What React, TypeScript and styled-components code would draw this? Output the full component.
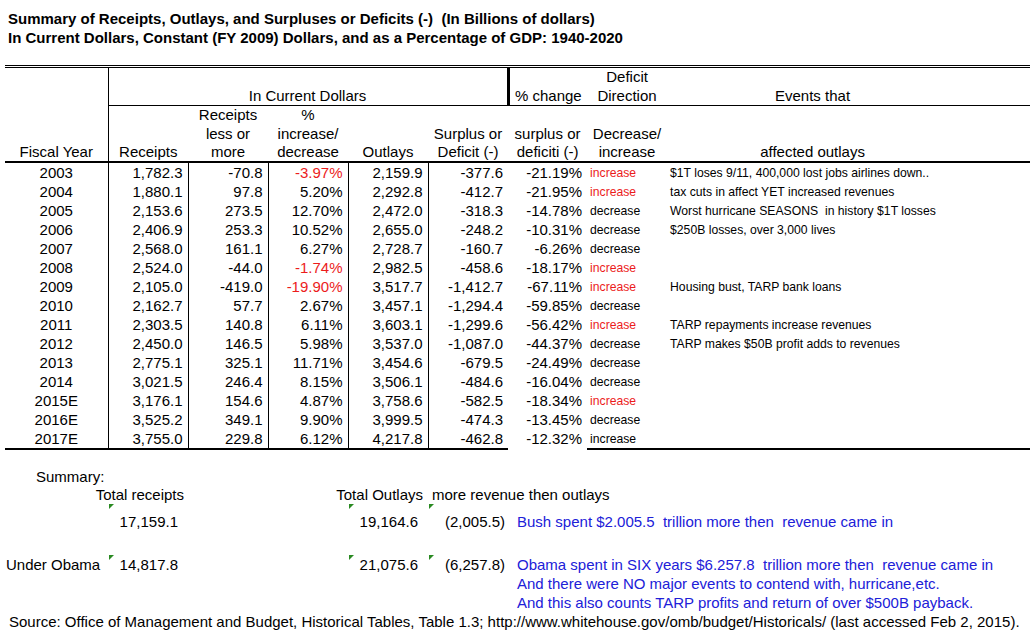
import React from 'react';
import styled, {createGlobalStyle} from 'styled-components';

////// Data //////
type Row = {
  year: string;
  receipts: string;
  diff: string;
  pct: string;
  pctRed?: boolean;
  outlays: string;
  surplus: string;
  change: string;
  dir: string;
  dirRed?: boolean;
  event?: string;
};

const rows: Row[] = [
  {year: '2003', receipts: '1,782.3', diff: '-70.8', pct: '-3.97%', pctRed: true, outlays: '2,159.9', surplus: '-377.6', change: '-21.19%', dir: 'increase', dirRed: true, event: '$1T loses 9/11, 400,000 lost jobs airlines down..'},
  {year: '2004', receipts: '1,880.1', diff: '97.8', pct: '5.20%', outlays: '2,292.8', surplus: '-412.7', change: '-21.95%', dir: 'increase', dirRed: true, event: 'tax cuts in affect YET increased revenues'},
  {year: '2005', receipts: '2,153.6', diff: '273.5', pct: '12.70%', outlays: '2,472.0', surplus: '-318.3', change: '-14.78%', dir: 'decrease', event: 'Worst hurricane SEASONS  in history $1T losses'},
  {year: '2006', receipts: '2,406.9', diff: '253.3', pct: '10.52%', outlays: '2,655.0', surplus: '-248.2', change: '-10.31%', dir: 'decrease', event: '$250B losses, over 3,000 lives'},
  {year: '2007', receipts: '2,568.0', diff: '161.1', pct: '6.27%', outlays: '2,728.7', surplus: '-160.7', change: '-6.26%', dir: 'decrease'},
  {year: '2008', receipts: '2,524.0', diff: '-44.0', pct: '-1.74%', pctRed: true, outlays: '2,982.5', surplus: '-458.6', change: '-18.17%', dir: 'increase', dirRed: true},
  {year: '2009', receipts: '2,105.0', diff: '-419.0', pct: '-19.90%', pctRed: true, outlays: '3,517.7', surplus: '-1,412.7', change: '-67.11%', dir: 'increase', dirRed: true, event: 'Housing bust, TARP bank loans'},
  {year: '2010', receipts: '2,162.7', diff: '57.7', pct: '2.67%', outlays: '3,457.1', surplus: '-1,294.4', change: '-59.85%', dir: 'decrease'},
  {year: '2011', receipts: '2,303.5', diff: '140.8', pct: '6.11%', outlays: '3,603.1', surplus: '-1,299.6', change: '-56.42%', dir: 'increase', dirRed: true, event: 'TARP repayments increase revenues'},
  {year: '2012', receipts: '2,450.0', diff: '146.5', pct: '5.98%', outlays: '3,537.0', surplus: '-1,087.0', change: '-44.37%', dir: 'decrease', event: 'TARP makes $50B profit adds to revenues'},
  {year: '2013', receipts: '2,775.1', diff: '325.1', pct: '11.71%', outlays: '3,454.6', surplus: '-679.5', change: '-24.49%', dir: 'decrease'},
  {year: '2014', receipts: '3,021.5', diff: '246.4', pct: '8.15%', outlays: '3,506.1', surplus: '-484.6', change: '-16.04%', dir: 'decrease'},
  {year: '2015E', receipts: '3,176.1', diff: '154.6', pct: '4.87%', outlays: '3,758.6', surplus: '-582.5', change: '-18.34%', dir: 'increase', dirRed: true},
  {year: '2016E', receipts: '3,525.2', diff: '349.1', pct: '9.90%', outlays: '3,999.5', surplus: '-474.3', change: '-13.45%', dir: 'decrease'},
  {year: '2017E', receipts: '3,755.0', diff: '229.8', pct: '6.12%', outlays: '4,217.8', surplus: '-462.8', change: '-12.32%', dir: 'increase'},
];

const colWidths = [103, 80, 80, 80, 80, 80, 79, 80, 363];

////// Component //////
export default function App() {
  return (
    <Page>
      <GlobalStyle />
      <Title>
        <div>Summary of Receipts, Outlays, and Surpluses or Deficits (-)&nbsp; (In Billions of dollars)</div>
        <div>In Current Dollars, Constant (FY 2009) Dollars, and as a Percentage of GDP: 1940-2020</div>
      </Title>

      <Sheet>
        <colgroup>
          {colWidths.map((w, i) => <Col key={i} $w={w} />)}
        </colgroup>
        <thead>
          <HeadRow $h={18}>
            <Head rowSpan={5} $right="thin" $bottom="thick">Fiscal Year</Head>
            <Head colSpan={5} $right="thick" />
            <Head />
            <Head>Deficit</Head>
            <Head />
          </HeadRow>
          <HeadRow $h={19}>
            <Head colSpan={5} $right="thick" $bottom="thin">In Current Dollars</Head>
            <Head $bottom="thin">% change</Head>
            <Head $bottom="thin">Direction</Head>
            <Head $bottom="thin" $pr={72}>Events that</Head>
          </HeadRow>
          <HeadRow $h={19}>
            <Head />
            <Head>Receipts</Head>
            <Head>%</Head>
            <Head />
            <Head />
            <Head />
            <Head />
            <Head />
          </HeadRow>
          <HeadRow $h={19}>
            <Head />
            <Head>less or</Head>
            <Head>increase/</Head>
            <Head />
            <Head>Surplus or</Head>
            <Head>surplus or</Head>
            <Head>Decrease/</Head>
            <Head />
          </HeadRow>
          <HeadRow $h={18}>
            <Head $bottom="thick">Receipts</Head>
            <Head $bottom="thick">more</Head>
            <Head $bottom="thick">decrease</Head>
            <Head $bottom="thick">Outlays</Head>
            <Head $bottom="thick">Deficit (-)</Head>
            <Head $bottom="thick">deficiti (-)</Head>
            <Head $bottom="thick">increase</Head>
            <Head $bottom="thick" $pr={72}>affected outlays</Head>
          </HeadRow>
        </thead>
        <tbody>
          {rows.map((r, i) => {
            const last = i === rows.length - 1;
            return (
              <tr key={r.year}>
                <Cell $align="center" $line $last={last}>{r.year}</Cell>
                <Cell $line $last={last}>{r.receipts}</Cell>
                <Cell $line $last={last}>{r.diff}</Cell>
                <Cell $line $last={last} $red={r.pctRed}>{r.pct}</Cell>
                <Cell $line $last={last}>{r.outlays}</Cell>
                <Cell $last={last}>{r.surplus}</Cell>
                <Cell>{r.change}</Cell>
                <Cell $align="left" $small $last={last} $red={r.dirRed}>{r.dir}</Cell>
                <Cell $align="left" $small $last={last}>{r.event}</Cell>
              </tr>
            );
          })}
        </tbody>
      </Sheet>

      <Summary>
        <SumRow $h={18}>
          <SumCell $pl={36}>Summary:</SumCell>
        </SumRow>
        <SumRow $h={18}>
          <SumCell />
          <SumCell $end $pr={4}>Total receipts</SumCell>
          <SumCell />
          <SumCell $end $pr={5}>Total Outlays</SumCell>
          <SumCell $pl={4}>more revenue then outlays</SumCell>
        </SumRow>
        <SumRow $h={28}>
          <SumCell />
          <SumCell $end $pr={10}><Marker />17,159.1</SumCell>
          <SumCell />
          <SumCell $end $pr={10}><Marker />19,164.6</SumCell>
          <SumCell $end $pr={3}><Marker />(2,005.5)</SumCell>
          <SumCell $pl={9} $blue>Bush spent $2.005.5&nbsp; trillion more then&nbsp; revenue came in</SumCell>
        </SumRow>
        <SumRow $h={23} />
        <SumRow $h={20}>
          <SumCell $pl={6}>Under Obama</SumCell>
          <SumCell $end $pr={10}><Marker />14,817.8</SumCell>
          <SumCell />
          <SumCell $end $pr={10}><Marker />21,075.6</SumCell>
          <SumCell $end $pr={3}><Marker />(6,257.8)</SumCell>
          <SumCell $pl={9} $blue>Obama spent in SIX years $6.257.8&nbsp; trillion more then&nbsp; revenue came in</SumCell>
        </SumRow>
        <SumRow $h={19}>
          <SumCell /><SumCell /><SumCell /><SumCell /><SumCell />
          <SumCell $pl={9} $blue>And there were NO major events to contend with, hurricane,etc.</SumCell>
        </SumRow>
        <SumRow $h={19}>
          <SumCell /><SumCell /><SumCell /><SumCell /><SumCell />
          <SumCell $pl={9} $blue>And this also counts TARP profits and return of over $500B payback.</SumCell>
        </SumRow>
        <Source>
          Source: Office of Management and Budget, Historical Tables, Table 1.3; http://www.whitehouse.gov/omb/budget/Historicals/ (last accessed Feb 2, 2015).
        </Source>
      </Summary>
    </Page>
  );
}

////// Component Styles //////
const GlobalStyle = createGlobalStyle`
  html, body {
    margin: 0;
    padding: 0;
    background: #fff;
  }
`;

const Page = styled.div`
  width: 1031px;
  height: 638px;
  overflow: hidden;
  font-family: "Liberation Sans", Arial, sans-serif;
  font-size: 15px;
  color: #000;
`;

const Title = styled.div`
  padding: 9px 0 0 8px;
  font-weight: bold;
  font-size: 15px;
  line-height: 19px;
`;

const Sheet = styled.table`
  margin: 18px 0 0 5px;
  width: 1025px;
  table-layout: fixed;
  border-collapse: collapse;
  border-top: 3px double #000;
`;

const Col = styled.col<{$w: number}>`
  width: ${p => p.$w}px;
`;

const lineWidth = {thin: '1px', thick: '2px'};

const HeadRow = styled.tr<{$h: number}>`
  height: ${p => p.$h}px;
`;

const Head = styled.th<{$right?: 'thin' | 'thick'; $bottom?: 'thin' | 'thick'; $pr?: number}>`
  padding: 0 ${p => p.$pr ?? 0}px 0 0;
  font-weight: normal;
  text-align: center;
  vertical-align: bottom;
  line-height: 18px;
  white-space: nowrap;
  border-right: ${p => p.$right === 'thick' ? '3px solid #000' : p.$right ? '1px solid #000' : 'none'};
  border-bottom: ${p => p.$bottom ? `${lineWidth[p.$bottom]} solid #000` : 'none'};
`;

const Cell = styled.td<{$align?: 'left' | 'center' | 'right'; $line?: boolean; $last?: boolean; $red?: boolean; $small?: boolean}>`
  height: 19px;
  padding: ${p => p.$align === 'left' ? '0 0 0 3px' : p.$align === 'center' ? '0' : '0 5px 0 0'};
  text-align: ${p => p.$align ?? 'right'};
  vertical-align: middle;
  line-height: 18px;
  white-space: pre;
  overflow: visible;
  font-size: ${p => p.$small ? '12.2px' : '15px'};
  color: ${p => p.$red ? '#ec1c1c' : '#000'};
  border-right: ${p => p.$line ? '1px solid #000' : 'none'};
  border-bottom: ${p => p.$last ? '2px solid #000' : 'none'};
`;

const Summary = styled.div`
  margin-top: 17px;
`;

const SumRow = styled.div<{$h: number}>`
  display: grid;
  grid-template-columns: 108px 80px 160px 80px 80px 1fr;
  height: ${p => p.$h}px;
  align-items: end;
`;

const SumCell = styled.div<{$end?: boolean; $pl?: number; $pr?: number; $blue?: boolean}>`
  position: relative;
  display: flex;
  justify-content: ${p => p.$end ? 'flex-end' : 'flex-start'};
  align-items: flex-end;
  height: 100%;
  padding: 0 ${p => p.$pr ?? 0}px 0 ${p => p.$pl ?? 0}px;
  line-height: 19px;
  white-space: nowrap;
  color: ${p => p.$blue ? '#2020d8' : '#000'};
`;

const Marker = styled.span`
  position: absolute;
  top: 1px;
  left: 1px;
  width: 0;
  height: 0;
  border-top: 5px solid #2a8a22;
  border-right: 5px solid transparent;
`;

const Source = styled.div`
  padding-left: 9px;
  line-height: 19px;
  white-space: nowrap;
`;
